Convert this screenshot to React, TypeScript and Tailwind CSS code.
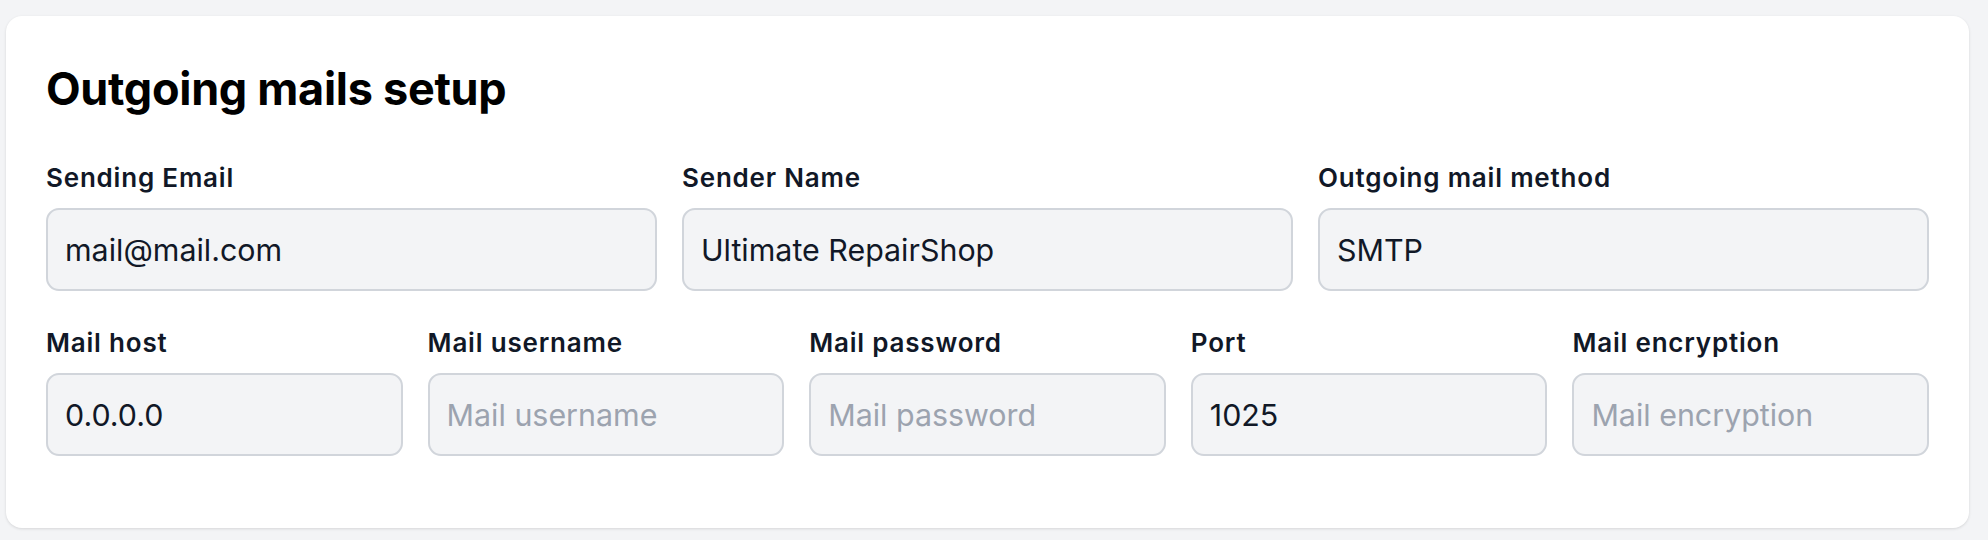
import React from "react";

const font = { fontFamily: "Inter, 'Noto Sans', sans-serif" };

function Field({ label, value, placeholder }: { label: string; value?: string; placeholder: string }) {
  return (
    <div className="flex flex-col min-w-0">
      <label className="text-[26px] leading-[30px] font-semibold text-[#111827] mb-[15px] tracking-[0.8px] whitespace-nowrap">{label}</label>
      <input
        readOnly
        defaultValue={value}
        placeholder={placeholder}
        className="h-[83px] w-full rounded-[13px] border-2 border-[#d1d5db] bg-[#f3f4f6] px-[17px] text-[30.4px] text-[#111827] placeholder:text-[#9ca3af] outline-none"
        style={font}
      />
    </div>
  );
}

export default function App() {
  return (
    <div className="min-h-[540px] w-full bg-[#f3f4f6] pt-[16px] pl-[6px]" style={font}>
      <div className="w-[1963px] h-[512px] rounded-[16px] bg-white shadow-[0_1px_3px_rgba(0,0,0,0.12)] px-[40px] pt-[45px]">
        <h1 className="text-[45px] leading-[56px] font-bold text-black mb-[46px] tracking-[-0.3px]">Outgoing mails setup</h1>
        <div className="grid grid-cols-3 gap-x-[25px]">
          <Field label="Sending Email" value="mail@mail.com" placeholder="Sending Email" />
          <Field label="Sender Name" value="Ultimate RepairShop" placeholder="Sender Name" />
          <Field label="Outgoing mail method" value="SMTP" placeholder="Outgoing mail method" />
        </div>
        <div className="grid grid-cols-5 gap-x-[25px] mt-[37px]">
          <Field label="Mail host" value="0.0.0.0" placeholder="Mail host" />
          <Field label="Mail username" placeholder="Mail username" />
          <Field label="Mail password" placeholder="Mail password" />
          <Field label="Port" value="1025" placeholder="Port" />
          <Field label="Mail encryption" placeholder="Mail encryption" />
        </div>
      </div>
    </div>
  );
}
